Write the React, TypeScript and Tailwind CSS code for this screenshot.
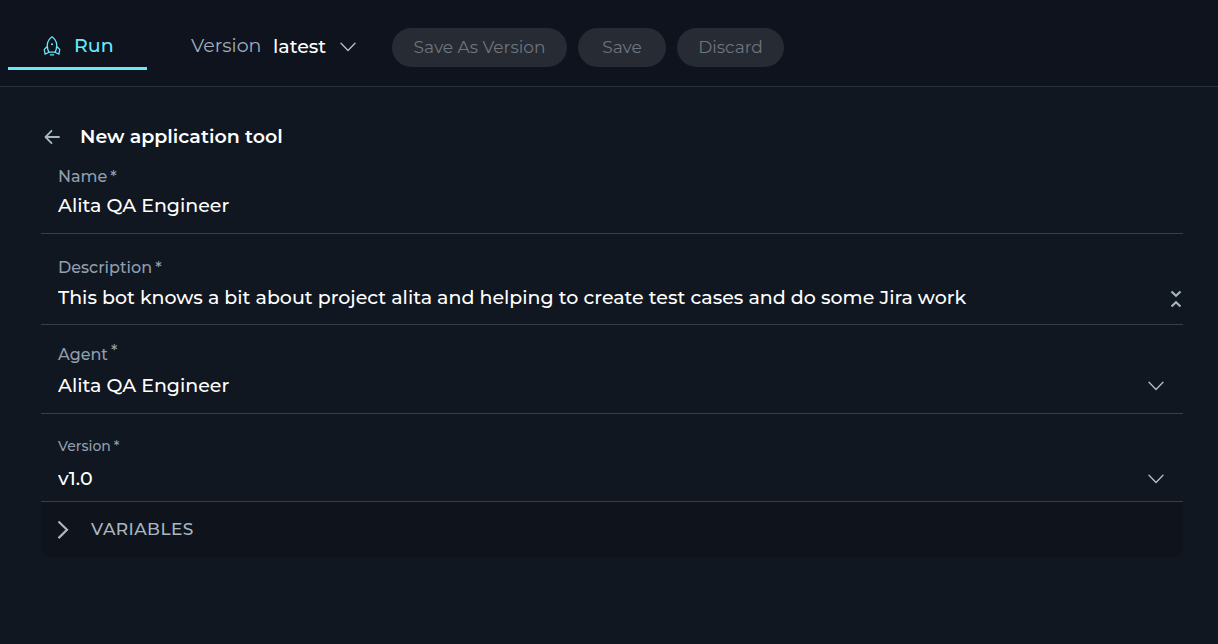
import type { ReactNode } from 'react';

function ChevronDown({ className = '' }: { className?: string }) {
  return (
    <svg className={`pointer-events-none h-4 w-4 shrink-0 ${className}`} viewBox="0 0 16 16" fill="none" stroke="#b4b9c2" strokeWidth="1.4" strokeLinecap="round" strokeLinejoin="round" aria-hidden="true">
      <path d="M1 4.200 8 11.600l7-7.400" />
    </svg>
  );
}

function RocketIcon() {
  return (
    <svg className="h-5 w-[18px]" viewBox="0 0 18 20" fill="none" stroke="#6ae8fa" strokeWidth="1.3" strokeLinecap="round" strokeLinejoin="round" aria-hidden="true">
      <path d="M9 .8C6.1 2.9 4.3 6 4.3 9.3c0 2.500.6 4.800 1.500 6.900h6.400c.9-2.100 1.500-4.400 1.500-6.900C13.700 6 11.900 2.900 9 .8Z" />
      <path d="M4.300 10.600 1.900 12.700a1.600 1.600 0 0 0-.6 1.500l.8 4 3.700-2M13.700 10.600l2.400 2.100c.5.4.7.9.6 1.500l-.8 4-3.700-2M7.300 18.800h3.400" />
      <circle cx="9" cy="8.300" r="1" fill="#6ae8fa" stroke="none" />
    </svg>
  );
}

function Label({ htmlFor, className = '', raised = false, children }: { htmlFor: string; className?: string; raised?: boolean; children: ReactNode }) {
  return (
    <label htmlFor={htmlFor} className={`flex h-5 items-center gap-[3px] font-medium text-[#929eaf] ${className}`}>
      {children}
      <span className={raised ? 'pb-2' : ''}>*</span>
    </label>
  );
}

const control = 'block h-7 w-full appearance-none bg-transparent p-0 text-[19px] font-medium leading-7 text-white outline-none';

function ActionButton({ className, children }: { className: string; children: ReactNode }) {
  return (
    <button type="button" disabled className={`h-[39px] rounded-full bg-[#262b34] text-center text-[17px] text-[#70747d] ${className}`}>
      {children}
    </button>
  );
}

export default function App() {
  return (
    <div className="min-h-screen bg-[#101720] font-['Montserrat','Inter',sans-serif] text-white">
      <header className="flex items-start border-b border-[#2a2e38] bg-[#0e131d] pb-4 pl-2">
        <nav>
          <a href="#run" aria-current="page" className="flex h-[70px] w-[139px] items-center gap-[13px] border-b-[3px] border-[#6ae8fa] pt-[25px] pl-[35px] text-[19px] font-medium text-[#6ae8fa]">
            <RocketIcon />
            Run
          </a>
        </nav>
        <div className="flex items-center pt-7 pl-11">
          <label htmlFor="header-version" className="w-[82px] pb-0.5 text-[19px] text-[#a0acbe]">Version</label>
          <div className="flex h-[38px] w-[119px] items-center">
            <select id="header-version" className="h-full w-full appearance-none bg-transparent text-[19px] font-medium text-white outline-none">
              <option>latest</option>
            </select>
            <ChevronDown className="mb-0.5 -ml-[52px]" />
          </div>
          <div className="flex gap-[11px]">
            <ActionButton className="w-[175px]">Save As Version</ActionButton>
            <ActionButton className="w-[88px]">Save</ActionButton>
            <ActionButton className="w-[107px]">Discard</ActionButton>
          </div>
        </div>
      </header>

      <main className="pt-9 pr-[35px] pb-10 pl-[41px]">
        <div className="flex h-7 items-center gap-4 pl-[3px]">
          <button type="button" aria-label="Back" className="flex h-5 w-5 items-center">
            <svg className="h-4 w-4" viewBox="0 0 16 16" fill="none" stroke="#a9b7c1" strokeWidth="1.8" strokeLinecap="round" strokeLinejoin="round" aria-hidden="true">
              <path d="M15 8H1.500M7.500 1.800 1.500 8l6 6.200" />
            </svg>
          </button>
          <h1 className="text-[19px] font-semibold">New application tool</h1>
        </div>

        <form>
          <div className="border-b border-[#3b3e46] px-[17px] pt-4 pb-[13px]">
            <Label htmlFor="name" className="text-[16px]">Name</Label>
            <input id="name" className={`mt-[5px] ${control}`} defaultValue="Alita QA Engineer" />
          </div>

          <div className="flex items-end border-b border-[#3b3e46] pt-6 pb-3 pl-[17px]">
            <div className="grow">
              <Label htmlFor="description" className="text-[16px]">Description</Label>
              <textarea id="description" rows={1} className={`mt-1.5 resize-none overflow-hidden ${control}`} defaultValue="This bot knows a bit about project alita and helping to create test cases and do some Jira work" />
            </div>
            <button type="button" aria-label="Collapse description" className="flex h-[26px] w-[13px] items-center">
              <svg className="h-[18px] w-3" viewBox="0 0 12 18" fill="none" stroke="#a9b7c1" strokeWidth="2" aria-hidden="true">
                <path d="m1.500 1.500 4.500 4.300 4.500-4.300M1.500 16.500 6 12.200l4.500 4.300" />
              </svg>
            </button>
          </div>

          <div className="border-b border-[#3b3e46] pt-5 pr-[19px] pb-[13px] pl-[17px]">
            <Label htmlFor="agent" raised className="text-[16px]">Agent</Label>
            <div className="mt-[7px] flex items-center">
              <select id="agent" className={control}>
                <option>Alita QA Engineer</option>
              </select>
              <ChevronDown className="-ml-4" />
            </div>
          </div>

          <div className="border-b border-[#3b3e46] pt-[22px] pr-[19px] pb-2 pl-[17px]">
            <Label htmlFor="version" className="text-[14px]">Version</Label>
            <div className="mt-[9px] flex items-center">
              <select id="version" className={control}>
                <option>v1.0</option>
              </select>
              <ChevronDown className="-ml-4" />
            </div>
          </div>

          <button type="button" aria-expanded="false" className="flex h-[55px] w-full items-center gap-[22px] rounded-b-lg bg-[#0f131c] pl-4 text-[17px] font-medium tracking-wide text-[#a9b7c1]">
            <svg className="h-5 w-3" viewBox="0 0 12 20" fill="none" stroke="#a9b7c1" strokeWidth="2.2" aria-hidden="true">
              <path d="m1.500 1.500 8.500 8.300-8.500 8.300" />
            </svg>
            VARIABLES
          </button>
        </form>
      </main>
    </div>
  );
}
